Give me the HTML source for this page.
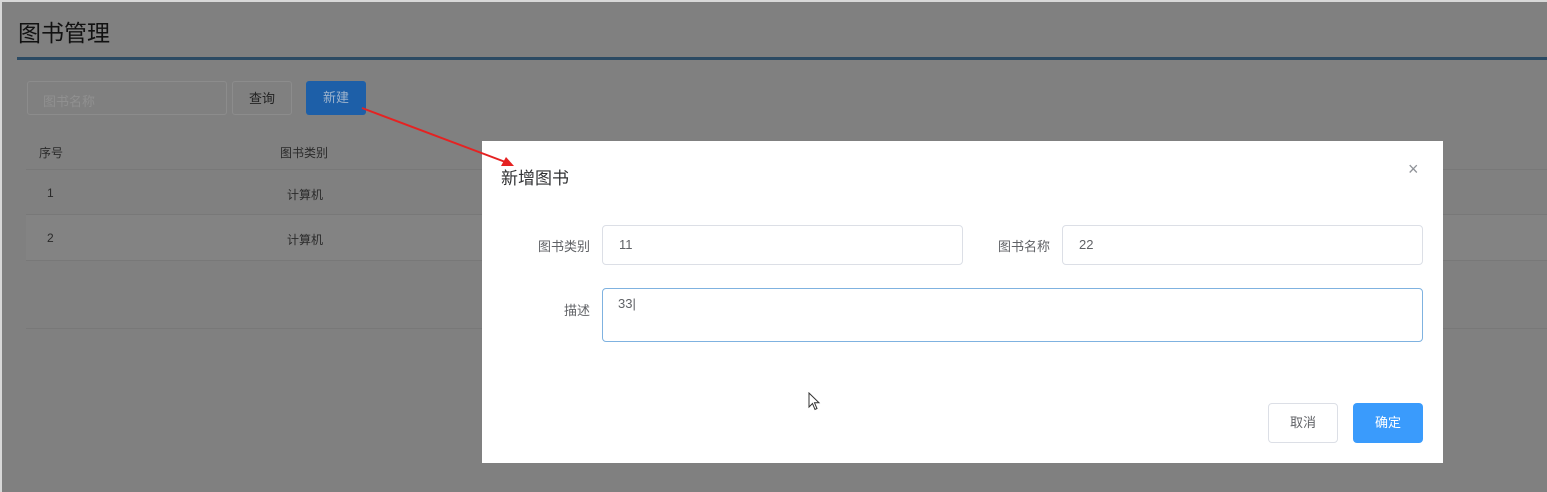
<!DOCTYPE html>
<html><head><meta charset="utf-8"><style>
*{box-sizing:border-box;margin:0;padding:0}
body{width:1547px;height:492px;background:#808080;font-family:"Liberation Sans","Noto Sans CJK SC",sans-serif;position:relative;overflow:hidden}
.a{position:absolute}
.frame{left:0;top:0;width:1547px;height:492px;border-top:2px solid #d8d8d8;border-left:2px solid #d8d8d8}
.title{left:18px;top:14px;font-size:23px;color:#111}
.bar{left:17px;top:57px;right:0;height:3px;background:#2b4a63}
.inp{left:27px;top:81px;width:200px;height:34px;border:1px solid #8c8c8c;border-radius:3px;font-size:13px;color:#999;padding:9px 15px;color:#909090}
.btn{top:81px;height:34px;border-radius:3px;font-size:13px;text-align:center;line-height:33px}
.row{left:26px;right:0;height:1px;background:#787878}
.t{font-size:12px;color:#2a2a2a}
.dlg{left:482px;top:141px;width:961px;height:322px;background:#fff}
.lbl{font-size:13px;color:#606266;text-align:right;width:60px}
.fi{height:40px;border:1px solid #dcdfe6;border-radius:4px;font-size:13px;color:#606266;padding:11px 16px}
</style></head><body>
<div class="a frame"></div>
<div class="a title">图书管理</div>
<div class="a bar"></div>
<div class="a inp">图书名称</div>
<div class="a btn" style="left:232px;width:60px;border:1px solid #8c8c8c;color:#222">查询</div>
<div class="a btn" style="left:306px;width:60px;background:#1d5fa8;color:#9fb4cc">新建</div>
<div class="a t" style="left:39px;top:144px">序号</div>
<div class="a t" style="left:280px;top:144px">图书类别</div>
<div class="a row" style="top:169px"></div>
<div class="a t" style="left:47px;top:186px">1</div>
<div class="a t" style="left:287px;top:186px">计算机</div>
<div class="a" style="left:26px;top:215px;right:0;height:45px;background:#838383"></div>
<div class="a row" style="top:214px"></div>
<div class="a t" style="left:47px;top:231px">2</div>
<div class="a t" style="left:287px;top:231px">计算机</div>
<div class="a row" style="top:260px"></div>
<div class="a row" style="top:328px"></div>
<div class="a dlg">
 <div class="a" style="left:19px;top:23px;font-size:17px;color:#303133">新增图书</div>
 <div class="a" style="left:926px;top:18px;font-size:18px;color:#909399">×</div>
 <div class="a lbl" style="left:48px;top:95px">图书类别</div>
 <div class="a fi" style="left:120px;top:84px;width:361px">11</div>
 <div class="a lbl" style="left:508px;top:95px">图书名称</div>
 <div class="a fi" style="left:580px;top:84px;width:361px">22</div>
 <div class="a lbl" style="left:48px;top:159px">描述</div>
 <div class="a fi" style="left:120px;top:147px;width:821px;height:54px;border-color:#7fb2e0;padding:7px 15px">33|</div>
 <div class="a" style="left:786px;top:262px;width:70px;height:40px;border:1px solid #dcdfe6;border-radius:4px;font-size:13px;color:#606266;text-align:center;line-height:38px">取消</div>
 <div class="a" style="left:871px;top:262px;width:70px;height:40px;background:#3a9bfc;border-radius:4px;font-size:13px;color:#fff;text-align:center;line-height:40px">确定</div>
 <svg class="a" style="left:326px;top:251px" width="14" height="20" viewBox="0 0 14 20"><path d="M1 1 L1 15 L4.5 11.5 L7 17.5 L9 16.5 L6.5 10.8 L11 10.8 Z" fill="#fff" stroke="#333" stroke-width="1"/></svg>
</div>
<svg class="a" style="left:0;top:0" width="1547" height="492"><line x1="362" y1="108" x2="508" y2="163" stroke="#e52222" stroke-width="2"/><path d="M514 166 L501 166 L506 157 Z" fill="#e52222"/></svg>
</body></html>
